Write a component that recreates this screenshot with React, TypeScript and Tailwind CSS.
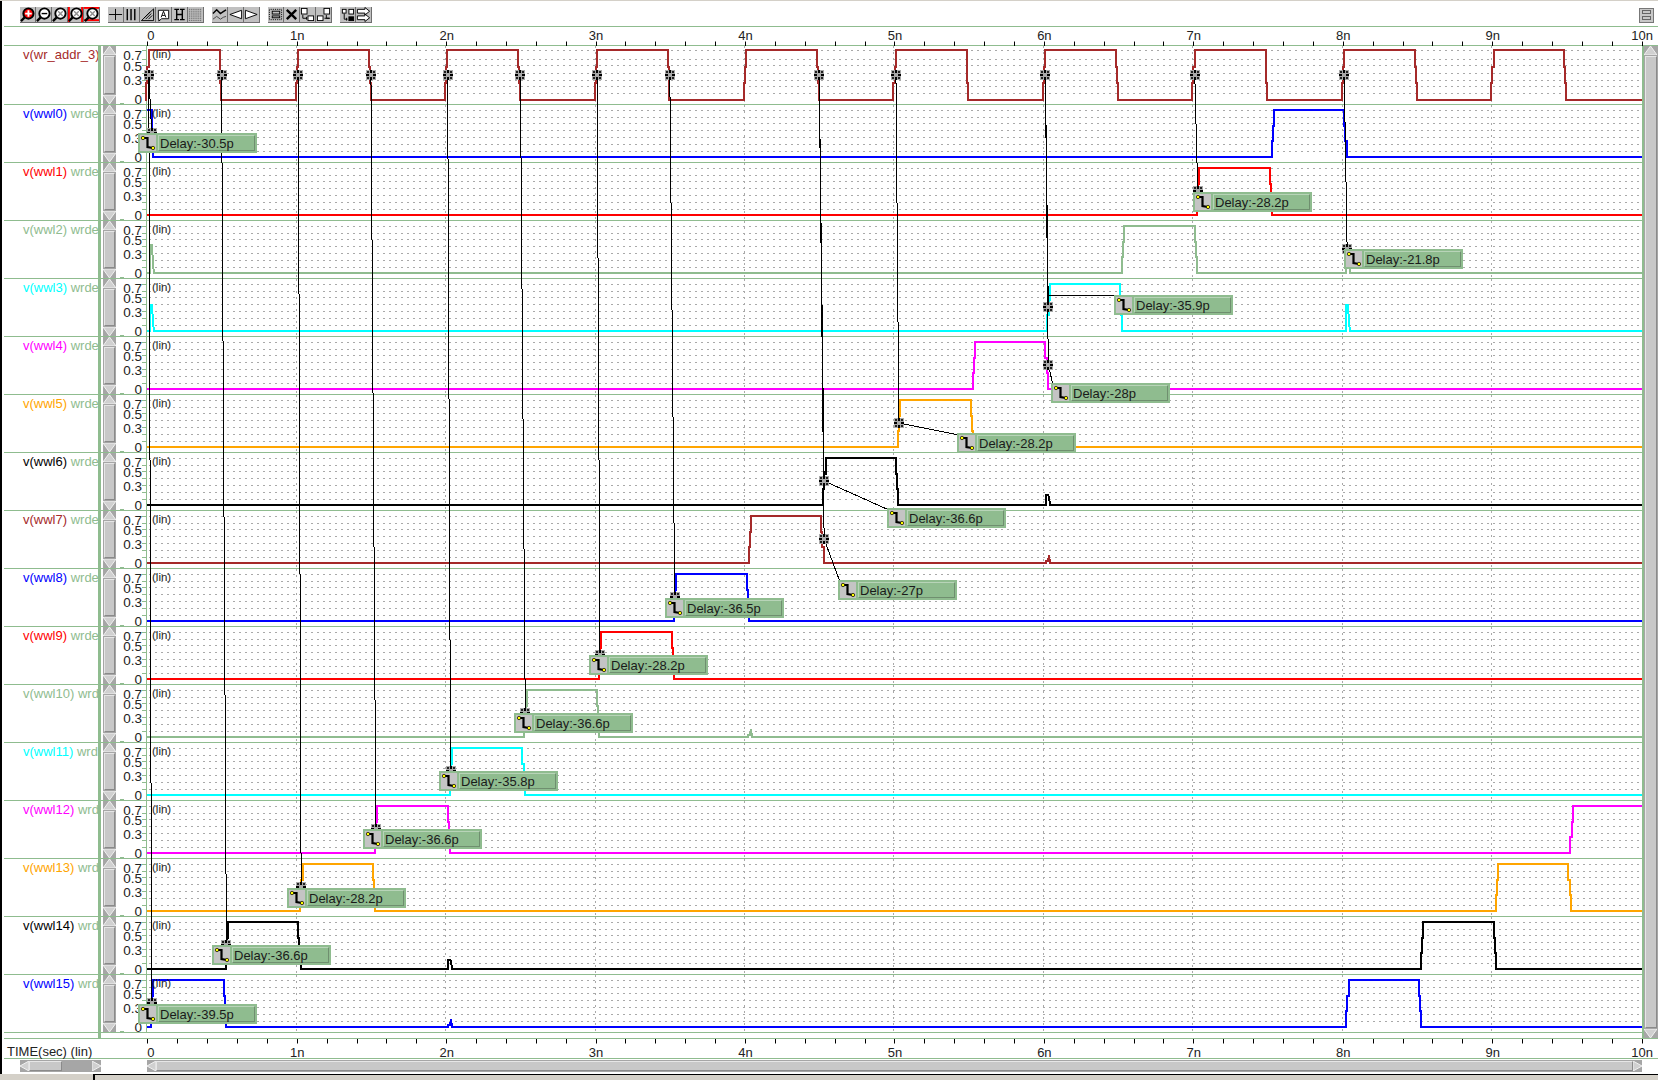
import React from "react";

const GREEN = "#8fbc8f";
const X0 = 147.3;
const P = 149.43;
const xt = (t: number) => X0 + t * P;
const RIGHT = 1642;

type Spec = {
  name: string;
  color: string;
  pulses: number[];
  spikes?: [number, number][];
  startHigh?: boolean;
};

const ROWS: Spec[] = [
  { name: "v(wr_addr_3)", color: "#a52a2a", pulses: [0, 1, 2, 3, 4, 5, 6, 7, 8, 9] },
  { name: "v(wwl0)", color: "#0000ff", pulses: [7.5], startHigh: true },
  { name: "v(wwl1)", color: "#ff0000", pulses: [7] },
  { name: "v(wwl2)", color: GREEN, pulses: [6.5], spikes: [[151, 24], [1347, 46]] },
  { name: "v(wwl3)", color: "#00ffff", pulses: [6], spikes: [[151, 26], [1347, 26]] },
  { name: "v(wwl4)", color: "#ff00ff", pulses: [5.5] },
  { name: "v(wwl5)", color: "#ffa500", pulses: [5] },
  { name: "v(wwl6)", color: "#000000", pulses: [4.5], spikes: [[1047, 42]] },
  { name: "v(wwl7)", color: "#a52a2a", pulses: [4], spikes: [[1047, 50]] },
  { name: "v(wwl8)", color: "#0000ff", pulses: [3.5] },
  { name: "v(wwl9)", color: "#ff0000", pulses: [3] },
  { name: "v(wwl10)", color: GREEN, pulses: [2.5], spikes: [[749, 50]] },
  { name: "v(wwl11)", color: "#00ffff", pulses: [2] },
  { name: "v(wwl12)", color: "#ff00ff", pulses: [1.5, 9.5] },
  { name: "v(wwl13)", color: "#ffa500", pulses: [1, 9] },
  { name: "v(wwl14)", color: "#000000", pulses: [0.5, 8.5], spikes: [[449, 43]] },
  { name: "v(wwl15)", color: "#0000ff", pulses: [0, 8], spikes: [[449, 50]] },
];

type Ev = { x: number; pts: [number, number][] };

function stairs(xa: number, xb: number, ya: number, yb: number): [number, number][] {
  const out: [number, number][] = [];
  const n = 3;
  for (let i = 0; i < n; i++) {
    const x = Math.round(xa + ((xb - xa) * i) / n);
    const x2 = Math.round(xa + ((xb - xa) * (i + 1)) / n);
    const y = Math.round(ya + ((yb - ya) * (i + 1)) / n);
    out.push([x, y]);
    out.push([x2, y]);
  }
  return out;
}

function wavePoints(s: Spec, first: boolean, high: number, low: number) {
  const evs: Ev[] = [];
  for (const t of s.pulses) {
    if (first) {
      evs.push({ x: xt(t) - 1, pts: stairs(xt(t) - 1, xt(t) + 2.5, low, high) });
      evs.push({ x: xt(t + 0.5) - 2.5, pts: stairs(xt(t + 0.5) - 2.5, xt(t + 0.5), high, low) });
    } else {
      evs.push({ x: xt(t) + 3.5, pts: stairs(xt(t) + 3.5, xt(t) + 7, low, high) });
      evs.push({ x: xt(t + 0.5) + 1.5, pts: stairs(xt(t + 0.5) + 1.5, xt(t + 0.5) + 5, high, low) });
    }
  }
  for (const [x, peak] of s.spikes ?? []) {
    evs.push({
      x: x - 1,
      pts: [
        [x - 1, low],
        [x - 1, peak],
        [x + 1, peak],
        [x + 2, low - 8],
        [x + 3, low],
      ],
    });
  }
  evs.sort((a, b) => a.x - b.x);
  const pts: [number, number][] = s.startHigh
    ? [
        [147, high],
        [152, high],
        [152, 29],
        [153, 29],
        [153, low],
      ]
    : [[147, low]];
  for (const e of evs) {
    pts.push([Math.round(e.x), low === pts[pts.length - 1][1] ? low : high]);
    pts.push(...e.pts);
  }
  pts.push([RIGHT, low]);
  return pts.map((p) => p.join(",")).join(" ");
}

const GRID_NORMAL = [5, 12, 18, 25, 32, 39, 46];
const GRID_FIRST = [4, 13, 19, 27, 34, 40, 47];

function Triangle({ dir, size = 13 }: { dir: "up" | "down" | "left" | "right"; size?: number }) {
  const pts =
    dir === "up"
      ? "0,9 6.5,0 13,9"
      : dir === "down"
        ? "0,0 13,0 6.5,9"
        : dir === "left"
          ? "9,0 9,10 0,5"
          : "0,0 0,10 9,5";
  const vertical = dir === "up" || dir === "down";
  return (
    <svg
      width={vertical ? size : 9}
      height={vertical ? 9 : 10}
      viewBox={vertical ? "0 0 13 9" : "0 0 9 10"}
      preserveAspectRatio="none"
      className="block shrink-0"
    >
      <polygon points={pts} fill="#d0d0d0" stroke="#f0f0f0" strokeWidth="1" />
    </svg>
  );
}

function RowScroll() {
  return (
    <div className="ml-[2px] flex h-full w-[13px] shrink-0 flex-col items-center bg-[#a6a6a6]">
      <Triangle dir="up" />
      <div className="my-[1px] w-[11px] flex-1 border border-t-[#e6e6e6] border-r-[#8a8a8a] border-b-[#8a8a8a] border-l-[#e6e6e6] bg-[#c8c8c8]" />
      <Triangle dir="down" />
    </div>
  );
}

function Row({ s, index }: { s: Spec; index: number }) {
  const first = index === 0;
  const h = first ? 58 : 57;
  const high = first ? 4 : 5;
  const low = first ? 54 : 52;
  const grid = first ? GRID_FIRST : GRID_NORMAL;
  const t = first ? [9, 20, 34, 53] : [9, 19, 33, 52];
  return (
    <div className={`flex border-b border-[#8fbc8f] ${first ? "h-[59px]" : "h-[58px]"}`}>
      <div className="w-[94px] shrink-0 overflow-hidden pl-[19px] pt-[1px] text-[13px] leading-[16px] whitespace-nowrap">
        <span style={{ color: s.color }}>{s.name}</span>
        {!first && <span className="text-[#8fbc8f]"> wrdec</span>}
      </div>
      <div className="w-[3px] shrink-0 bg-[#8fbc8f]" />
      <RowScroll />
      <svg width={1526} height={h} viewBox={`116 0 1526 ${h}`} className="block shrink-0">
        <line x1={120} x2={124} y1={h - 0.5} y2={h - 0.5} stroke={GREEN} strokeWidth={1} />
        <line x1={146.5} x2={146.5} y1={0} y2={h} stroke={GREEN} strokeWidth={1} />
        {grid.map((y) => (
          <line key={y} x1={142} x2={147} y1={y + 0.5} y2={y + 0.5} stroke={GREEN} strokeWidth={1} />
        ))}
        {grid.map((y) => (
          <line
            key={y}
            x1={149}
            x2={RIGHT}
            y1={y + 0.5}
            y2={y + 0.5}
            stroke="#a9a9a9"
            strokeWidth={1}
            strokeDasharray="2 4"
          />
        ))}
        {[1, 2, 3, 4, 5, 6, 7, 8, 9].map((n) => (
          <line
            key={n}
            x1={Math.round(xt(n)) - 0.5}
            x2={Math.round(xt(n)) - 0.5}
            y1={0}
            y2={h}
            stroke="#a9a9a9"
            strokeWidth={1}
            strokeDasharray="2 4"
          />
        ))}
        <polyline
          points={wavePoints(s, first, high, low)}
          fill="none"
          stroke={s.color}
          strokeWidth={2}
          shapeRendering="crispEdges"
        />
        {["0.7", "0.5", "0.3", "0"].map((l, i) => (
          <text key={l} x={142} y={t[i] + 5} textAnchor="end" fontSize={13.5} fill="#222">
            {l}
          </text>
        ))}
        <text x={152} y={12} fontSize={11.5} fill="#222">
          (lin)
        </text>
      </svg>
    </div>
  );
}

function Axis({ dirDown }: { dirDown: boolean }) {
  const ticks = Array.from({ length: 51 }, (_, i) => i / 5);
  const labels = [0, 1, 2, 3, 4, 5, 6, 7, 8, 9, 10];
  return (
    <svg width={1542} height={19} viewBox="116 0 1542 19" className="block shrink-0">
      {ticks.map((t) => {
        const x = Math.round(xt(t)) + 0.5;
        return (
          <line
            key={t}
            x1={x}
            x2={x}
            y1={dirDown ? 0 : 14.5}
            y2={dirDown ? 4.5 : 19}
            stroke="#000"
            strokeWidth={1}
          />
        );
      })}
      {labels.map((n) => (
        <text
          key={n}
          x={n === 0 ? xt(0) + 3.5 : xt(n) + 0.5}
          y={dirDown ? 18 : 13}
          textAnchor="middle"
          fontSize={13}
          fill="#222"
        >
          {n === 0 ? "0" : `${n}n`}
        </text>
      ))}
    </svg>
  );
}

function Lens({ fill, children }: { fill: string; children?: React.ReactNode }) {
  return (
    <>
      <line x1="5" y1="11" x2="1" y2="15" stroke="#000" strokeWidth="2.5" />
      <circle cx="9" cy="7" r="5.5" fill={fill} stroke="#000" strokeWidth="2" />
      {children}
    </>
  );
}

const XMark = () => (
  <path d="M6.5 4.5 L11.5 9.5 M11.5 4.5 L6.5 9.5" stroke="#909090" strokeWidth="1.5" fill="none" />
);

const ICONS: React.ReactNode[][] = [
  [
    <Lens fill="#ff0000" key="a">
      <path d="M9 3.5V10.5M5.5 7H12.5" stroke="#fff" strokeWidth="2" />
    </Lens>,
    <Lens fill="#fff" key="b">
      <path d="M6 7H12" stroke="#000" strokeWidth="1.5" />
    </Lens>,
    <Lens fill="#fff" key="c">
      <XMark />
    </Lens>,
    <g key="d">
      <rect x="0" y="0" width="2" height="16" fill="#ff0000" />
      <rect x="14" y="0" width="2" height="16" fill="#ff0000" />
      <Lens fill="#fff">
        <XMark />
      </Lens>
    </g>,
    <g key="e">
      <rect x="0" y="0" width="16" height="2" fill="#ff0000" />
      <rect x="0" y="13" width="16" height="2" fill="#ff0000" />
      <Lens fill="#fff">
        <XMark />
      </Lens>
    </g>,
  ],
  [
    <path key="a" d="M1 8H15M8 2V14" stroke="#000" strokeWidth="1" />,
    <path key="b" d="M3.5 2V14M7.5 2V14M11.5 2V14M3.5 2" stroke="#000" strokeWidth="1.5" fill="none" />,
    <g key="c" stroke="#000" fill="none" strokeWidth="1">
      <path d="M1.5 14.5L14.5 2V14.5Z" />
      <path d="M6 13L12 7M9 13L13 9M4 12L11 5" />
    </g>,
    <g key="d">
      <path d="M2.5 3.5H13.5V12.5H6L3 15V12.5H2.5Z" fill="#fff" stroke="#000" strokeWidth="1" />
      <path d="M5.5 11L8 4.5L10.5 11M6.5 9H9.5" fill="none" stroke="#000" strokeWidth="1" />
    </g>,
    <g key="e" stroke="#000" fill="none" strokeWidth="1.5">
      <path d="M5 3V13M11 3V13M5 8H11" />
      <path d="M2.5 2.5H7.5M8.5 2.5H13.5M2.5 13.5H7.5M8.5 13.5H13.5" />
    </g>,
    <path
      key="f"
      d="M1.5 2V15M3.5 2V15M5.5 2V15M7.5 2V15M9.5 2V15M11.5 2V15M13.5 2V15"
      stroke="#555"
      strokeWidth="1"
      strokeDasharray="1 1"
    />,
  ],
  [
    <g key="a" fill="none" stroke="#000" strokeWidth="1">
      <path d="M1 7L5 3L9 7L12 5L15 3" strokeWidth="1.5" />
      <path d="M1 13L5 10L9 13L12 11L15 10" stroke="#444" />
    </g>,
    <polygon key="b" points="14.5,3.5 14.5,12.5 2,8" fill="#fff" stroke="#000" strokeWidth="1" />,
    <polygon key="c" points="1.5,3.5 1.5,12.5 14,8" fill="#fff" stroke="#000" strokeWidth="1" />,
  ],
  [
    <g key="a" fill="none" stroke="#000" strokeWidth="1">
      <rect x="1.5" y="2.5" width="13" height="11" strokeDasharray="1 1" />
      <rect x="4.5" y="4.5" width="8" height="3" fill="#c0c0c0" />
      <rect x="4.5" y="9.5" width="8" height="2" fill="#c0c0c0" />
    </g>,
    <path key="b" d="M3 3L13 13M13 3L3 13" stroke="#000" strokeWidth="2.5" />,
    <g key="c" fill="#fff" stroke="#000" strokeWidth="1">
      <rect x="1.5" y="1.5" width="6" height="6" />
      <rect x="8.5" y="9.5" width="6" height="5" />
      <path d="M3 8.5V12H7M7 10.5V13.5" fill="none" />
    </g>,
    <g key="d" fill="#fff" stroke="#000" strokeWidth="1">
      <rect x="8.5" y="1.5" width="6" height="6" />
      <rect x="1.5" y="9.5" width="6" height="5" />
      <path d="M11 8.5V12H14M9 12H15" fill="none" />
    </g>,
  ],
  [
    <g key="a" stroke="#000" strokeWidth="1" fill="#fff">
      <rect x="2.5" y="2.5" width="4" height="4" />
      <rect x="9.5" y="2.5" width="5" height="5" />
      <rect x="9.5" y="10.5" width="5" height="4" fill="#000" />
      <path d="M4.5 7V13H8M7 11.5V14.5" fill="none" />
    </g>,
    <g key="b" stroke="#000" strokeWidth="1" fill="#fff">
      <path d="M1.5 2.5H9.5V0.5L14.5 4.5L9.5 8.5V6.5H1.5Z" />
      <path d="M1.5 9.5H9.5V7.5L14.5 11.5L9.5 15.5V13.5H1.5Z" />
    </g>,
  ],
];

function Toolbar() {
  return (
    <div className="flex h-[26px] items-center border-b border-[#8fbc8f] pt-[3px] pl-[16px]">
      {ICONS.map((grp, i) => (
        <div key={i} className="mr-[8px] flex">
          {grp.map((ic, j) => (
            <div
              key={j}
              className="h-[16px] w-[16px] shrink-0 border-r border-b border-[#6e6e6e] bg-[#c0c0c0]"
            >
              <svg width={15} height={15} viewBox="0 0 16 16" className="block">
                {ic}
              </svg>
            </div>
          ))}
        </div>
      ))}
      <div className="ml-auto mr-[4px] flex h-[15px] w-[15px] flex-col justify-center gap-[2px] border border-[#777] bg-[#c8c8c8] px-[2px]">
        <div className="h-[4px] border border-[#666]" />
        <div className="h-[4px] border border-[#666]" />
      </div>
    </div>
  );
}

const L = (r: number) => 104 + 58 * (r - 1);

type Delay = { r: number; t: number; tx: number; ty: number; text: string; src: number };
const DELAYS: Delay[] = [
  { r: 1, t: 0, src: 0, tx: 138, ty: 133, text: "Delay:-30.5p" },
  { r: 2, t: 7, src: 7, tx: 1193, ty: 192, text: "Delay:-28.2p" },
  { r: 3, t: 8, src: 8, tx: 1344, ty: 249, text: "Delay:-21.8p" },
  { r: 4, t: 6, src: 6, tx: 1114, ty: 295, text: "Delay:-35.9p" },
  { r: 5, t: 6, src: 6, tx: 1051, ty: 383, text: "Delay:-28p" },
  { r: 6, t: 5, src: 5, tx: 957, ty: 433, text: "Delay:-28.2p" },
  { r: 7, t: 4.5, src: 4.5, tx: 887, ty: 508, text: "Delay:-36.6p" },
  { r: 8, t: 4.5, src: 4.5, tx: 838, ty: 580, text: "Delay:-27p" },
  { r: 9, t: 3.5, src: 3.5, tx: 665, ty: 598, text: "Delay:-36.5p" },
  { r: 10, t: 3, src: 3, tx: 589, ty: 655, text: "Delay:-28.2p" },
  { r: 11, t: 2.5, src: 2.5, tx: 514, ty: 713, text: "Delay:-36.6p" },
  { r: 12, t: 2, src: 2, tx: 439, ty: 771, text: "Delay:-35.8p" },
  { r: 13, t: 1.5, src: 1.5, tx: 363, ty: 829, text: "Delay:-36.6p" },
  { r: 14, t: 1, src: 1, tx: 287, ty: 888, text: "Delay:-28.2p" },
  { r: 15, t: 0.5, src: 0.5, tx: 212, ty: 945, text: "Delay:-36.6p" },
  { r: 16, t: 0, src: 0, tx: 138, ty: 1004, text: "Delay:-39.5p" },
];

function Marker({ x, y }: { x: number; y: number }) {
  const cx = Math.round(x);
  const cy = Math.round(y);
  return (
    <g transform={`translate(${cx - 5} ${cy - 5})`} shapeRendering="crispEdges">
      <rect x={0} y={0} width={10} height={10} fill="#a8a8a8" />
      <rect x={0} y={4} width={3} height={2} fill="#000" />
      <rect x={7} y={4} width={3} height={2} fill="#000" />
      <rect x={4} y={0} width={2} height={3} fill="#000" />
      <rect x={4} y={7} width={2} height={3} fill="#000" />
      <rect x={1} y={1} width={2} height={2} fill="#222" />
      <rect x={7} y={1} width={2} height={2} fill="#222" />
      <rect x={1} y={7} width={2} height={2} fill="#222" />
      <rect x={7} y={7} width={2} height={2} fill="#222" />
    </g>
  );
}

function Tag({ d }: { d: Delay }) {
  return (
    <div
      className="absolute flex h-[20px] w-[119px] gap-[2px] bg-[#8fbc8f] p-[2px]"
      style={{ left: d.tx, top: d.ty }}
    >
      <div className="h-[16px] w-[16px] shrink-0 bg-[#c4c4c4]">
        <svg width={16} height={16} viewBox="0 0 16 16" className="block">
          <path d="M3 3H7.5V12L13 13" fill="none" stroke="#000" strokeWidth="2.2" />
          <circle cx="3" cy="3" r="1.7" fill="#ffff00" stroke="#000" strokeWidth="0.7" />
          <circle cx="13" cy="13" r="1.7" fill="#ffff00" stroke="#000" strokeWidth="0.7" />
        </svg>
      </div>
      <div className="flex-1 border border-t-[#b8d4b8] border-r-[#6f8f6f] border-b-[#6f8f6f] border-l-[#b8d4b8] pt-[1px] pl-[1px] text-[13px] leading-[14px] text-[#1a1a1a]">
        {d.text}
      </div>
    </div>
  );
}

function Overlay() {
  return (
    <>
      <svg
        width={1658}
        height={1080}
        viewBox="0 0 1658 1080"
        className="pointer-events-none absolute top-0 left-0 block"
        shapeRendering="crispEdges"
      >
        {DELAYS.map((d) => {
          const mx = xt(d.t) + 4.4;
          const my = L(d.r) + 29;
          const sx = xt(d.src) + (Number.isInteger(d.src) ? 1.5 : -0.5);
          return (
            <g key={d.r}>
              <line x1={sx} y1={75} x2={mx} y2={my} stroke="#000" strokeWidth={1} />
              <line
                x1={mx}
                y1={d.r === 4 ? 295 : my}
                x2={d.tx + 2}
                y2={d.r === 4 ? 295 : d.ty + 2}
                stroke="#000"
                strokeWidth={1}
              />
            </g>
          );
        })}
        {[0, 0.5, 1, 1.5, 2, 2.5, 3, 3.5, 4.5, 5, 6, 7, 8].map((t) => (
          <Marker key={t} x={xt(t) + (Number.isInteger(t) ? 1.5 : -0.5)} y={75} />
        ))}
        {DELAYS.map((d) => (
          <Marker key={d.r} x={xt(d.t) + 4.4} y={L(d.r) + 29} />
        ))}
      </svg>
      {DELAYS.map((d) => (
        <Tag key={d.r} d={d} />
      ))}
    </>
  );
}

function RightScroll() {
  return (
    <div className="flex w-[16px] shrink-0 border-l-2 border-[#8fbc8f] bg-[#a6a6a6]">
      <div className="flex w-[13px] flex-col items-center">
        <Triangle dir="up" />
        <div className="my-[1px] w-[12px] flex-1 border border-t-[#e6e6e6] border-r-[#8a8a8a] border-b-[#8a8a8a] border-l-[#e6e6e6] bg-[#c8c8c8]" />
        <Triangle dir="down" />
      </div>
    </div>
  );
}

function HScroll({ className, inner }: { className: string; inner: string }) {
  return (
    <div className={`flex h-[12px] items-center ${className}`}>
      <Triangle dir="left" />
      <div className={`h-[10px] border border-t-[#e6e6e6] border-r-[#8a8a8a] border-b-[#8a8a8a] border-l-[#e6e6e6] bg-[#c8c8c8] ${inner}`} />
      <div className="flex-1" />
      <Triangle dir="right" />
    </div>
  );
}

export default function App() {
  return (
    <div className="relative flex h-[1080px] w-[1658px] flex-col overflow-hidden bg-white font-['Liberation_Sans',sans-serif]">
      <div className="h-[1px] shrink-0 bg-[#d4d0c8]" />
      <div className="flex h-[1073px] shrink-0 flex-col border-l-2 border-black">
        <div className="ml-[2px]">
          <Toolbar />
          <div className="flex h-[19px] border-b border-[#8fbc8f]">
            <div className="w-[112px] shrink-0" />
            <Axis dirDown={false} />
          </div>
          <div className="flex">
            <div className="w-[1638px] shrink-0">
              {ROWS.map((s, i) => (
                <Row key={s.name} s={s} index={i} />
              ))}
              <div className="ml-[94px] h-[5px] w-[3px] bg-[#8fbc8f]" />
            </div>
            <RightScroll />
          </div>
          <div className="flex h-[21px] border-y border-[#8fbc8f]">
            <div className="w-[112px] shrink-0 pt-[5px] pl-[3px] text-[13px] leading-[15px] whitespace-nowrap text-[#222]">
              TIME(sec) (lin)
            </div>
            <Axis dirDown />
          </div>
          <div className="flex h-[14px] pt-[1px]">
            <div className="w-[16px] shrink-0" />
            <HScroll className="w-[81px] shrink-0 bg-[#a6a6a6]" inner="w-[33px]" />
            <div className="w-[46px] shrink-0" />
            <div className="flex h-[12px] w-[1495px] shrink-0 items-center bg-[#a6a6a6]">
              <Triangle dir="left" />
              <div className="h-[10px] flex-1 border border-t-[#e6e6e6] border-r-[#8a8a8a] border-b-[#8a8a8a] border-l-[#e6e6e6] bg-[#c8c8c8]" />
              <Triangle dir="right" />
            </div>
          </div>
        </div>
      </div>
      <div className="flex flex-1 bg-[#d4d0c8]">
        <div className="w-[93px] shrink-0" />
        <div className="flex-1 border-t border-l-2 border-black" />
      </div>
      <Overlay />
    </div>
  );
}
